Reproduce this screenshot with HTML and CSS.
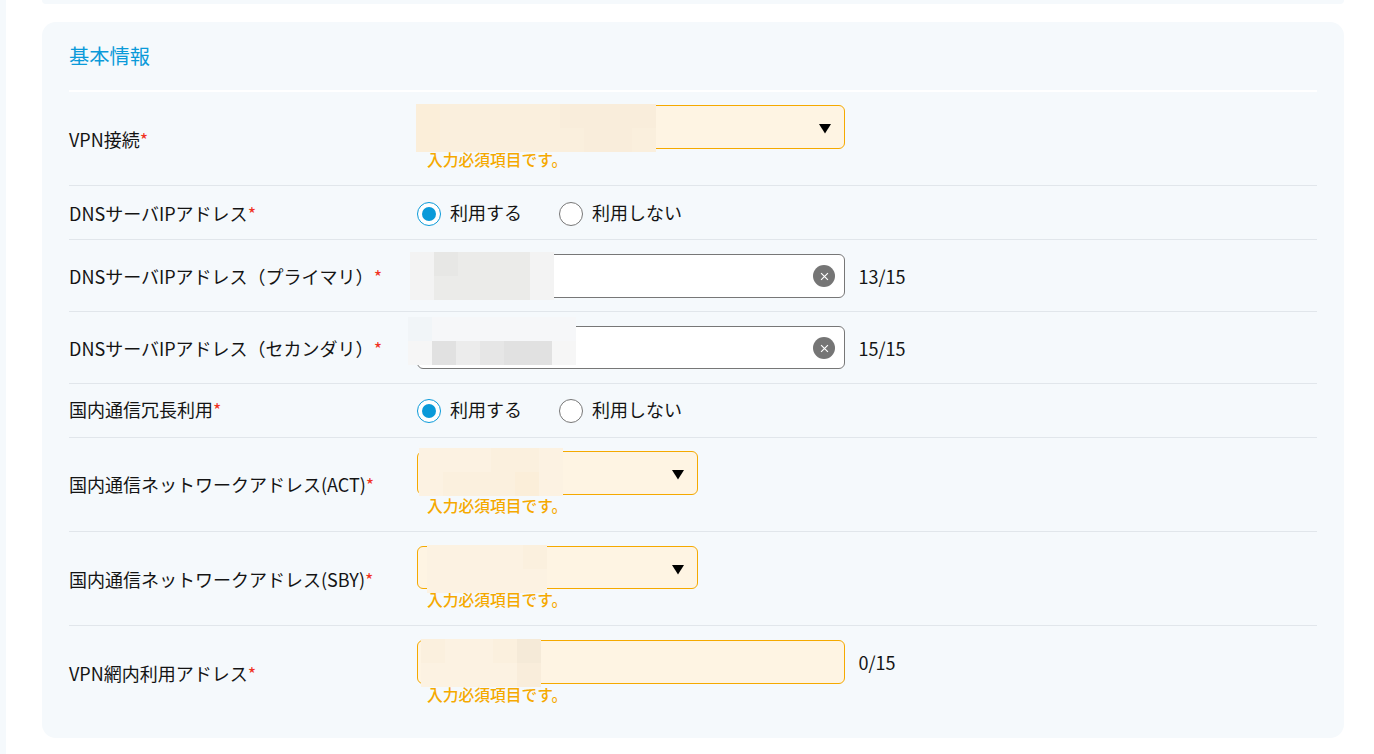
FILE: index.html
```html
<!DOCTYPE html>
<html lang="ja">
<head>
<meta charset="utf-8">
<title>基本情報</title>
<link rel="stylesheet" href="styles.css">
</head>
<body>
<main class="main">
  <div class="prev-card"></div>
  <section class="card">
    <h2 class="title">基本情報</h2>

    <div class="row row-tall tight">
      <div class="label">VPN接続<span class="req">*</span></div>
      <div class="control">
        <div class="field warn w-wide">
          <svg class="caret" viewBox="0 0 12 10"><polygon points="0,0 12,0 6,9.5"/></svg>
        </div>
        <p class="err">入力必須項目です。</p>
        <div class="mosaic m1">
          <i class="a1"></i><i class="a2"></i><i class="a2"></i><i class="a2"></i><i class="a2"></i><i class="a2"></i><i class="a3"></i><i class="a3"></i><i class="a3"></i><i class="a3"></i>
          <i class="a1"></i><i class="a2"></i><i class="a2"></i><i class="a2"></i><i class="a2"></i><i class="a2"></i><i class="a2"></i><i class="a3"></i><i class="a3"></i><i class="a2"></i>
        </div>
      </div>
    </div>

    <div class="row row-radio first">
      <div class="label">DNSサーバIPアドレス<span class="req">*</span></div>
      <div class="radios">
        <span class="radio on"></span><span class="radio-text">利用する</span>
        <span class="radio"></span><span class="radio-text">利用しない</span>
      </div>
    </div>

    <div class="row row-mid">
      <div class="label">DNSサーバIPアドレス（プライマリ）<span class="req">*</span></div>
      <div class="control with-count">
        <div class="field plain w-wide"><span class="clear"><svg viewBox="0 0 10 10"><path d="M1.2 1.2 8.8 8.8M8.8 1.2 1.2 8.8"/></svg></span></div>
        <span class="count">13/15</span>
        <div class="mosaic m2">
          <i class="g1"></i><i class="g3"></i><i class="g2"></i><i class="g2"></i><i class="g2"></i><i class="g1"></i>
          <i class="g1"></i><i class="g2"></i><i class="g2"></i><i class="g2"></i><i class="g2"></i><i class="g1"></i>
        </div>
      </div>
    </div>

    <div class="row row-mid">
      <div class="label">DNSサーバIPアドレス（セカンダリ）<span class="req">*</span></div>
      <div class="control with-count">
        <div class="field plain w-wide short"><span class="clear"><svg viewBox="0 0 10 10"><path d="M1.2 1.2 8.8 8.8M8.8 1.2 1.2 8.8"/></svg></span></div>
        <span class="count">15/15</span>
        <div class="mosaic m3">
          <i class="h0"></i><i class="h1"></i><i class="h1"></i><i class="h1"></i><i class="h1"></i><i class="h1"></i><i class="h1"></i>
          <i class="h2"></i><i class="h5"></i><i class="h3"></i><i class="h4"></i><i class="h5"></i><i class="h5"></i><i class="h2"></i>
        </div>
      </div>
    </div>

    <div class="row row-radio">
      <div class="label">国内通信冗長利用<span class="req">*</span></div>
      <div class="radios">
        <span class="radio on"></span><span class="radio-text">利用する</span>
        <span class="radio"></span><span class="radio-text">利用しない</span>
      </div>
    </div>

    <div class="row row-tall tight">
      <div class="label up">国内通信ネットワークアドレス(ACT)<span class="req">*</span></div>
      <div class="control">
        <div class="field warn w-narrow">
          <svg class="caret" viewBox="0 0 12 10"><polygon points="0,0 12,0 6,9.5"/></svg>
        </div>
        <p class="err">入力必須項目です。</p>
        <div class="mosaic m4">
          <i class="a0"></i><i class="a0"></i><i class="a0"></i><i class="a5"></i><i class="a5"></i><i class="a0"></i>
          <i class="a0"></i><i class="a5"></i><i class="a5"></i><i class="a5"></i><i class="a1"></i><i class="a0"></i>
        </div>
      </div>
    </div>

    <div class="row row-tall">
      <div class="label up">国内通信ネットワークアドレス(SBY)<span class="req">*</span></div>
      <div class="control">
        <div class="field warn w-narrow short">
          <svg class="caret" viewBox="0 0 12 10"><polygon points="0,0 12,0 6,9.5"/></svg>
        </div>
        <p class="err">入力必須項目です。</p>
        <div class="mosaic m5">
          <i class="a0"></i><i class="a0"></i><i class="a0"></i><i class="a0"></i><i class="a5"></i>
          <i class="a0"></i><i class="a0"></i><i class="a0"></i><i class="a0"></i><i class="a0"></i>
        </div>
      </div>
    </div>

    <div class="row row-last">
      <div class="label">VPN網内利用アドレス<span class="req">*</span></div>
      <div class="control with-count">
        <div class="field warn w-wide"></div>
        <span class="count">0/15</span>
        <p class="err">入力必須項目です。</p>
        <div class="mosaic m6">
          <i class="a5"></i><i class="a0"></i><i class="a0"></i><i class="a5"></i><i class="a4"></i>
          <i class="a0"></i><i class="a0"></i><i class="a0"></i><i class="a0"></i><i class="a3"></i>
        </div>
      </div>
    </div>
  </section>
</main>
</body>
</html>
```
FILE: styles.css
```css
* { box-sizing: border-box; }
html, body { margin: 0; height: 100%; }
body {
  background: #fff;
  overflow: hidden;
  font-family: "Noto Sans CJK JP", "Noto Sans", sans-serif;
  color: #141414;
}
.main {
  height: 754px;
  border-left: 6px solid #f5f9fc;
  padding-left: 36px;
  width: 1344px;
}
.prev-card {
  height: 4px;
  background: #f5f9fc;
  border-radius: 0 0 14px 14px;
  margin-bottom: 18px;
}
.card {
  height: 716px;
  background: #f5f9fc;
  border-radius: 14px;
  padding: 0 27px;
}
.title {
  margin: 0;
  height: 70px;
  border-bottom: 2px solid #fff;
  font-size: 20.25px;
  font-weight: 400;
  line-height: 68px;
  color: #0a9ad9;
}
.row {
  display: grid;
  grid-template-columns: 348px 1fr;
  align-items: center;
  border-bottom: 1px solid #e1e6eb;
  font-size: 18px;
}
.row-tall { height: 94px; align-items: start; padding-top: 14px; }
.row-tall.tight { padding-top: 13px; }
.row-radio { height: 54px; }
.row-mid { height: 72px; align-items: start; padding-top: 14px; }
.row-last { border-bottom: 0; align-items: start; padding-top: 14px; }
.row-tall .label, .row-mid .label, .row-last .label { line-height: 44px; }
.row-tall .label { margin-top: 12px; }
.row-tall .label.up { margin-top: 11px; }
.row-last .label { margin-top: 11px; }
.row-radio .label { margin-bottom: 4px; }
.row-radio.first .label { margin-bottom: 0; }
.row-radio.first .radios { margin-top: 2px; }
.label { white-space: nowrap; }
.req { color: #f0321e; }
.control { position: relative; }
.with-count { display: flex; align-items: flex-start; flex-wrap: wrap; column-gap: 13.5px; }
.field {
  position: relative;
  height: 44px;
  border-radius: 6px;
  border: 1px solid;
}
.short { height: 43px; }
.w-wide { width: 428px; }
.w-narrow { width: 281px; }
.warn { background: #fef4e3; border-color: #f5a900; }
.plain { background: #fff; border-color: #777; }
.caret {
  position: absolute;
  right: 13px;
  top: 18px;
  width: 12px;
  height: 10px;
  fill: #000;
}
.clear {
  position: absolute;
  right: 9px;
  top: 10px;
  width: 22px;
  height: 22px;
  border-radius: 50%;
  background: #757575;
  display: flex;
  align-items: center;
  justify-content: center;
}
.clear svg { width: 9px; height: 9px; stroke: #fff; stroke-width: 1.3; fill: none; }
.count { line-height: 44px; }
.err {
  margin: 0;
  padding: 1px 0 0 10px;
  width: 100%;
  font-size: 15.75px;
  line-height: 20px;
  font-weight: 500;
  color: #f5a900;
}
.radios { display: flex; align-items: center; height: 24px; }
.radio {
  width: 24px;
  height: 24px;
  border-radius: 50%;
  background: #fff;
  border: 1px solid #777;
  flex: none;
}
.radio.on { border-color: #0a9ad9; display: flex; align-items: center; justify-content: center; }
.radio.on::after {
  content: "";
  width: 14px;
  height: 14px;
  border-radius: 50%;
  background: #0a9ad9;
}
.radio-text { margin: 0 37px 4px 9px; line-height: 22px; }

/* redaction mosaics laid over the fields */
.mosaic { position: absolute; display: grid; grid-auto-rows: 24px; grid-auto-columns: 24px; }
.mosaic i { display: block; }
.m1 { left: -1px; top: -1px; grid-template-columns: repeat(10, 24px); }
.m2 { left: -7px; top: -2px; grid-template-columns: repeat(6, 24px); }
.m3 { left: -9px; top: -9px; grid-template-columns: repeat(7, 24px); }
.m4 { left: 2px; top: -3px; grid-template-columns: repeat(6, 24px); }
.m5 { left: 10px; top: -1px; grid-template-columns: repeat(5, 24px); }
.m6 { left: 4px; top: -1px; grid-template-columns: repeat(5, 24px); }
.a0 { background: #fcf2e2; }
.a5 { background: #fbf0de; }
.a1 { background: #fbeed9; }
.a2 { background: #faefdd; }
.a3 { background: #f9eddb; }
.a4 { background: #f5ead8; }
.g1 { background: #f3f3f3; }
.g2 { background: #ebebe9; }
.g3 { background: #e7e7e5; }
.h0 { background: #f1f5f8; }
.h1 { background: #f6f7f9; }
.h2 { background: #f6f6f6; }
.h3 { background: #ececec; }
.h4 { background: #e6e6e6; }
.h5 { background: #e1e1e1; }
```
